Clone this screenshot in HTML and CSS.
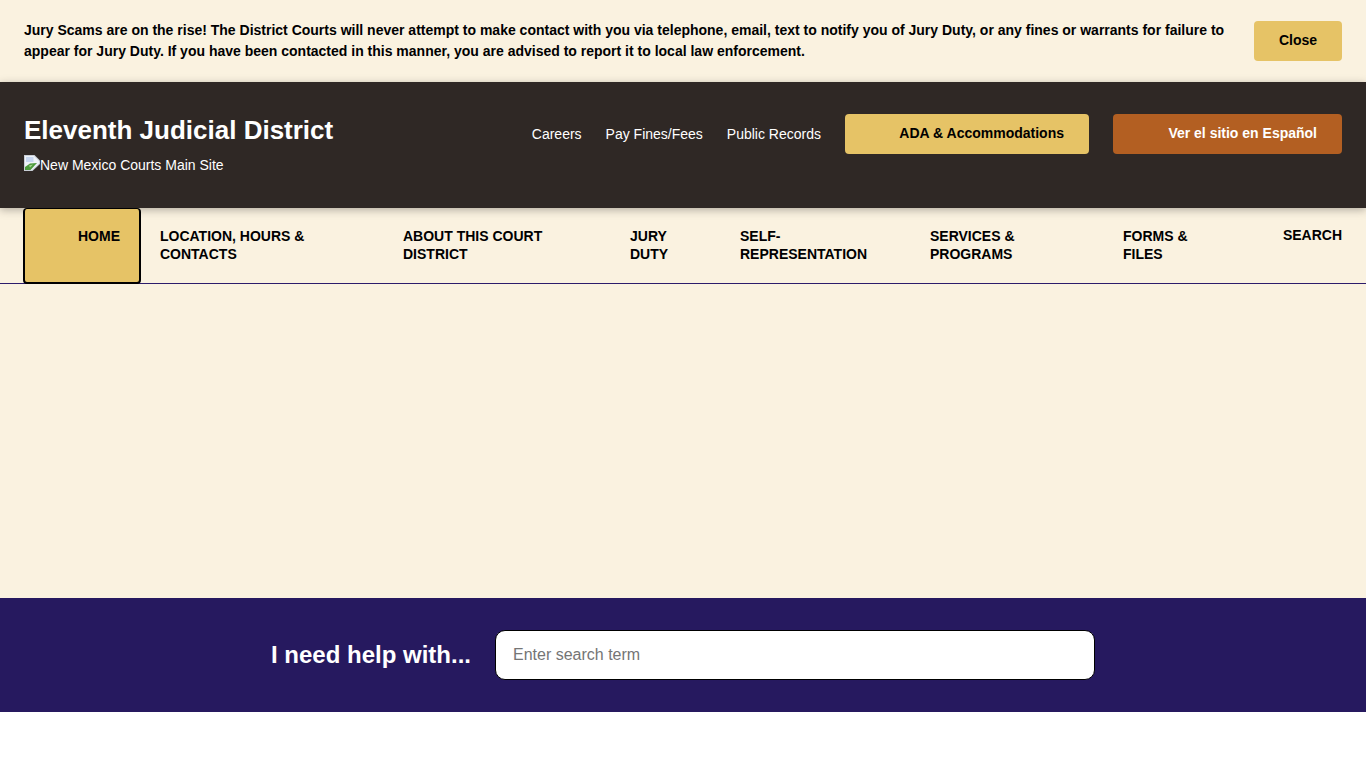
FILE: index.html
```html
<!DOCTYPE html>
<html lang="en">
<head>
<meta charset="utf-8">
<title>Eleventh Judicial District</title>
<link rel="stylesheet" href="styles.css">
</head>
<body>
<section class="alert">
  <p class="alert-text">Jury Scams are on the rise! The District Courts will never attempt to make contact with you via telephone, email, text to notify you of Jury Duty, or any fines or warrants for failure to appear for Jury Duty. If you have been contacted in this manner, you are advised to report it to local law enforcement.</p>
  <button class="btn btn-gold btn-close" type="button">Close</button>
</section>
<header class="masthead">
  <div class="brand">
    <a class="site-title" href="#">Eleventh Judicial District</a>
    <a class="main-site" href="#">
      <svg class="broken" width="16" height="16" viewBox="0 0 16 16" aria-hidden="true">
        <path d="M0 0H10.5L16 5.5V9L8.5 16H0Z" fill="#c9ced6"/>
        <path d="M1 1H10L15 6V8.6L8 15H1Z" fill="#eef2f8"/>
        <path d="M2 2H9.5V7H2Z" fill="#c6d6f0"/>
        <path d="M1 15V12L6 8.5L13 8L6.5 15Z" fill="#4c9a3c"/>
        <path d="M5 10.5L9 9.5L6 12.5Z" fill="#a5d392"/>
      </svg><span>New Mexico Courts Main Site</span>
    </a>
  </div>
  <div class="utility">
    <a class="util-link" href="#">Careers</a>
    <a class="util-link" href="#">Pay Fines/Fees</a>
    <a class="util-link" href="#">Public Records</a>
    <a class="btn btn-gold btn-ada" href="#">ADA &amp; Accommodations</a>
    <a class="btn btn-orange btn-es" href="#">Ver el sitio en Español</a>
  </div>
</header>
<nav class="nav">
  <a class="nav-item nav-home" href="#">HOME</a>
  <a class="nav-item nav-location" href="#">LOCATION, HOURS &amp; CONTACTS</a>
  <a class="nav-item nav-about" href="#">ABOUT THIS COURT DISTRICT</a>
  <a class="nav-item nav-jury" href="#">JURY DUTY</a>
  <a class="nav-item nav-self" href="#">SELF-REPRESENTATION</a>
  <a class="nav-item nav-services" href="#">SERVICES &amp; PROGRAMS</a>
  <a class="nav-item nav-forms" href="#">FORMS &amp; FILES</a>
  <a class="nav-item nav-search" href="#">SEARCH</a>
</nav>
<main class="content"></main>
<section class="help">
  <label class="help-label" for="q">I need help with...</label>
  <input class="help-input" id="q" type="text" placeholder="Enter search term">
</section>
</body>
</html>
```
FILE: styles.css
```css
* { box-sizing: border-box; }
html, body { margin: 0; padding: 0; }
body {
  background: #fff;
  color: #000;
  font-family: "Liberation Sans", Arial, sans-serif;
  height: 768px;
  overflow: hidden;
}
a { color: inherit; text-decoration: none; }

.alert {
  height: 82px;
  background: #faf2e0;
  display: flex;
  align-items: center;
  justify-content: space-between;
  padding: 0 24px;
}
.alert-text {
  margin: 0;
  width: 1204px;
  font-size: 14px;
  font-weight: 700;
  line-height: 21px;
}
.btn {
  display: flex;
  align-items: center;
  height: 40px;
  border: 0;
  border-radius: 4px;
  font-family: inherit;
  font-size: 14px;
  font-weight: 700;
}
.btn-gold { background: #e6c366; color: #000; }
.btn-orange { background: #b35f22; color: #fff; }
.btn-close {
  width: 88px;
  justify-content: center;
  padding: 0 0 2px;
}
.btn-ada, .btn-es { justify-content: flex-end; padding: 0 25px 2px 0; }
.btn-ada { width: 244px; }
.btn-es { width: 229px; }

.masthead {
  position: relative;
  z-index: 1;
  height: 126px;
  background: #2f2825;
  color: #fff;
  display: flex;
  justify-content: space-between;
  padding: 32px 24px 0;
  box-shadow: 0 2px 8px rgba(50, 43, 40, 0.35);
}
.brand { display: flex; flex-direction: column; align-items: flex-start; }
.site-title {
  font-size: 26px;
  font-weight: 700;
  line-height: 32px;
}
.main-site {
  display: flex;
  align-items: flex-start;
  margin-top: 9px;
  font-size: 14px;
  line-height: 21px;
}
.broken { flex: none; }
.utility { display: flex; align-items: center; gap: 24px; height: 40px; }
.util-link { font-size: 14px; }

.nav {
  height: 76px;
  background: #faf2e0;
  border-bottom: 1px solid #2c1c6b;
  display: flex;
  padding: 0 24px 0 23px;
  font-size: 14px;
  font-weight: 700;
  line-height: 18px;
}
.nav-item { display: block; padding: 19px 0 0 19px; }
.nav-home {
  position: relative;
  z-index: 2;
  width: 118px;
  height: 76px;
  padding: 18px 19px 0 0;
  text-align: right;
  background: #e6c366;
  border: 2px solid #000;
  border-top-width: 1px;
  border-radius: 4px;
}
.nav-location { width: 243px; padding-right: 50px; }
.nav-about { width: 227px; padding-right: 40px; }
.nav-jury { width: 110px; padding-right: 40px; }
.nav-self { width: 190px; padding-right: 40px; }
.nav-services { width: 193px; padding-right: 60px; }
.nav-forms { width: 161px; padding-right: 50px; }
.nav-search { flex: 1; padding: 18px 0 0; text-align: right; }

.content { height: 314px; background: #faf2e0; }

.help {
  height: 114px;
  background: #26195f;
  display: flex;
  align-items: center;
  padding-left: 271px;
  gap: 24px;
}
.help-label { color: #fff; font-size: 24px; font-weight: 700; }
.help-input {
  width: 600px;
  height: 50px;
  background: #fff;
  border: 1px solid #000;
  border-radius: 10px;
  padding: 0 17px;
  font-family: inherit;
  font-size: 16px;
  color: #000;
}
.help-input::placeholder { color: #757575; opacity: 1; }
```
